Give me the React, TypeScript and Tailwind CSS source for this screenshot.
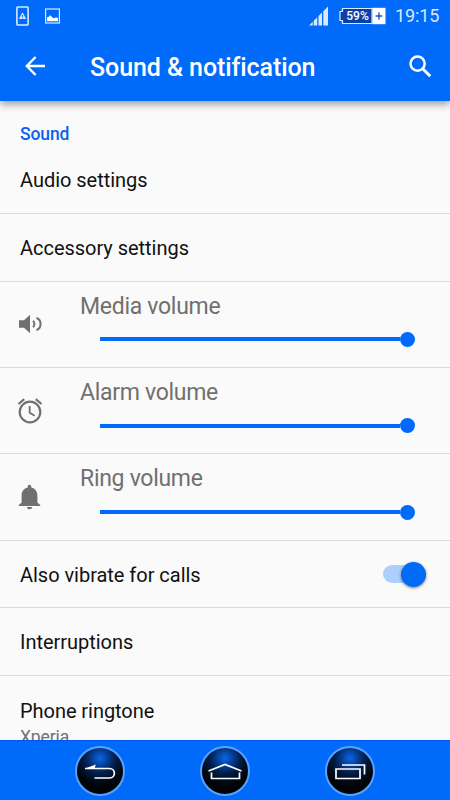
import type { ReactNode } from 'react';

interface RowProps {
    label: string;
    children?: ReactNode;
}

interface VolumeRowProps {
    label: string;
    icon: ReactNode;
}

function StatusBar() {
    return (
        <div className="flex h-8 items-center pr-[9px] pl-4 text-[#d9e8ff]">
            <svg width="13" height="20" viewBox="0 0 13 20" fill="none" stroke="currentColor">
                <rect x="0.9" y="1" width="11.2" height="18" rx="0.8" strokeWidth="1.6" />
                <path fill="currentColor" fillRule="evenodd" stroke="none" d="M6.5 6.2 10.2 13H2.8zM5.9 9v1.8h1.2V9zM5.9 11.4v.8h1.2v-.8z" />
            </svg>
            <svg className="ml-4" width="15" height="16" viewBox="0 0 15 16">
                <rect x="0.6" y="1" width="13.8" height="14" fill="none" stroke="currentColor" strokeWidth="1.2" />
                <path fill="#fff" d="M2 13.2V9.4L3.5 8.9 5 7.3l1.7 1.2 1.3 1.4 1.8.2 1.4-.8 1.8.9v3z" />
            </svg>
            <svg className="ml-auto" width="20" height="20" viewBox="0 0 20 20" fill="currentColor">
                <path d="M0 19.5 3.7 15.8V19.5zM4.7 14.8 8.2 11.3V19.5H4.7zM9.5 10 13 6.5V19.5H9.5zM14.3 5.2 19 .5V19.5H14.3z" />
            </svg>
            <div className="relative -mt-px ml-[9px] h-[18px] w-12">
                <svg className="absolute inset-0" width="48" height="18" viewBox="0 0 48 18">
                    <path d="M4.5 1.5H34v15H4.5v-3H2v-9h2.5z" fill="#0b3fa8" stroke="currentColor" strokeWidth="1.2" />
                    <path fill="#fff" d="M34.5.8H47.5V17.2H34.5z" />
                    <path d="M41 5.5v7M37.5 9h7" stroke="#2458c5" strokeWidth="1.5" />
                </svg>
                <span className="absolute top-0 left-[5px] w-[29px] text-center text-[12px] leading-[18px] font-medium text-white">59%</span>
            </div>
            <span className="ml-[9px] w-[46px] text-[18px] leading-8 tracking-[-0.1px] whitespace-nowrap">19:15</span>
        </div>
    );
}

function Toolbar() {
    return (
        <div className="flex h-[69px] items-center text-white">
            <svg className="-mt-px ml-[25px]" width="21" height="20" viewBox="0 0 21 20" fill="none" stroke="currentColor" strokeWidth="2.4">
                <path d="M10.6 1 1.8 10l8.8 9M2 10h18" />
            </svg>
            <h1 className="mt-[3px] ml-11 text-[25px] font-medium tracking-[-0.08px] whitespace-nowrap">Sound &amp; notification</h1>
            <svg className="-mt-px mr-[18px] ml-auto" width="23" height="23" viewBox="0 0 23 23" fill="none" stroke="currentColor">
                <circle cx="8.6" cy="8.6" r="7.1" strokeWidth="2.5" />
                <path d="m13.7 13.7 7.6 7.6" strokeWidth="3" />
            </svg>
        </div>
    );
}

function Row({ label, children }: RowProps) {
    return (
        <div className="flex h-[67.6px] shrink-0 items-center border-b border-[#d9d9d9] pr-6 pl-5">
            <span className="pt-px text-[20px] tracking-[-0.03px] whitespace-nowrap text-[#111]">{label}</span>
            {children}
        </div>
    );
}

function VolumeRow({ label, icon }: VolumeRowProps) {
    return (
        <div className="flex h-[86.4px] shrink-0 border-b border-[#d9d9d9]">
            <div className="flex w-20 items-center pl-[17px] text-[#707070]">{icon}</div>
            <div className="flex-1 pt-[10px]">
                <p className="text-[23px] leading-[30px] tracking-[-0.29px] text-[#707070]">{label}</p>
                <div className="mt-[10.4px] ml-5 flex w-[315px] items-center">
                    <div className="h-1 flex-1 bg-[#006bfa]" />
                    <div className="size-[15px] rounded-full bg-[#006bfa]" />
                </div>
            </div>
        </div>
    );
}

function NavButton({ children }: { children: ReactNode }) {
    return (
        <button className="flex size-[50px] items-center justify-center rounded-full border-2 border-[#5aa2ff] bg-[radial-gradient(circle_at_50%_22%,#0868e8_0%,#06409a_18%,#021d48_36%,#000509_62%,#000_100%)]">
            <svg className="shrink-0" width="46" height="46" viewBox="0 0 46 46" fill="none" stroke="#fff" strokeWidth="1.7">
                {children}
            </svg>
        </button>
    );
}

export default function App() {
    return (
        <div className="flex h-[800px] w-[450px] flex-col overflow-hidden bg-[#fafafa] font-['Roboto',sans-serif]">
            <header className="z-10 h-[101px] shrink-0 bg-[#006bfa] shadow-[0_3px_8px_rgba(0,0,0,0.4)]">
                <StatusBar />
                <Toolbar />
            </header>

            <main className="flex min-h-0 flex-1 flex-col overflow-hidden">
                <h2 className="h-[45.4px] shrink-0 pt-[23px] pl-5 text-[17.5px] leading-5 font-medium tracking-[-0.1px] text-[#0a62ee]">Sound</h2>
                <Row label="Audio settings" />
                <Row label="Accessory settings" />
                <VolumeRow
                    label="Media volume"
                    icon={
                        <svg width="26" height="26" viewBox="0 0 26 26" fill="none" stroke="currentColor" strokeWidth="2">
                            <path d="M2 9.3h5l6-5.5v18.4l-6-5.5H2z" fill="currentColor" stroke="none" />
                            <path d="M16 9.8c1.8 1.6 1.8 4.8 0 6.4M19.5 7c5.4 1.7 5.4 10.3 0 12" />
                        </svg>
                    }
                />
                <VolumeRow
                    label="Alarm volume"
                    icon={
                        <svg width="26" height="26" viewBox="0 0 26 26" fill="none" stroke="currentColor" strokeWidth="2.2">
                            <circle cx="13" cy="14" r="10.3" />
                            <path d="M1.5 6 7.2 1.2M24.5 6 18.8 1.2" />
                            <path d="M12.7 8v6.7l5 3" strokeWidth="1.8" />
                        </svg>
                    }
                />
                <VolumeRow
                    label="Ring volume"
                    icon={
                        <svg width="26" height="26" viewBox="0 0 26 26" fill="currentColor">
                            <path d="M12.5.7c-1.1 0-1.8.8-1.8 1.9v.8C6.7 4.3 4.6 7.5 4.6 11.5v7L1.8 21v1h21.4v-1l-2.8-2.5v-7c0-4-2.1-7.2-6.1-8.1v-.8c0-1.1-.7-1.9-1.8-1.9zM9.9 23h5.2c0 1.3-1.1 2.3-2.6 2.3S9.9 24.3 9.9 23z" />
                        </svg>
                    }
                />
                <Row label="Also vibrate for calls">
                    <div className="ml-auto flex h-[18px] w-[43px] items-center justify-end rounded-full bg-[#adcffb]">
                        <div className="size-[25px] shrink-0 rounded-full bg-[#006bf5] shadow-[0_1px_3px_rgba(0,0,0,0.5)]" />
                    </div>
                </Row>
                <Row label="Interruptions" />
                <div className="h-[64px] shrink-0 pt-[22.6px] pl-5">
                    <p className="text-[20px] leading-6 tracking-[-0.05px] text-[#111]">Phone ringtone</p>
                    <p className="mt-1 text-[17.5px] leading-5 tracking-[-0.1px] text-[#707070]">Xperia</p>
                </div>
            </main>

            <nav className="z-10 flex h-[60px] shrink-0 items-center justify-center gap-[75px] border-t border-[#0055f5] bg-[#006bfa]">
                <NavButton>
                    <path d="M8 20.5H32.5c6.5 0 6.5 9.5 0 9.5H17.5" />
                    <path d="M8 20.5 18.8 16.5 17.5 20.5z" fill="#fff" stroke="none" />
                </NavButton>
                <NavButton>
                    <path d="M6.5 23 23 16.5 39.5 23" />
                    <path d="M9.5 24.5v6h28v-6" />
                </NavButton>
                <NavButton>
                    <path d="M9 21h24v9.5H9zM15 17h22.5v9.5" />
                </NavButton>
            </nav>
        </div>
    );
}
